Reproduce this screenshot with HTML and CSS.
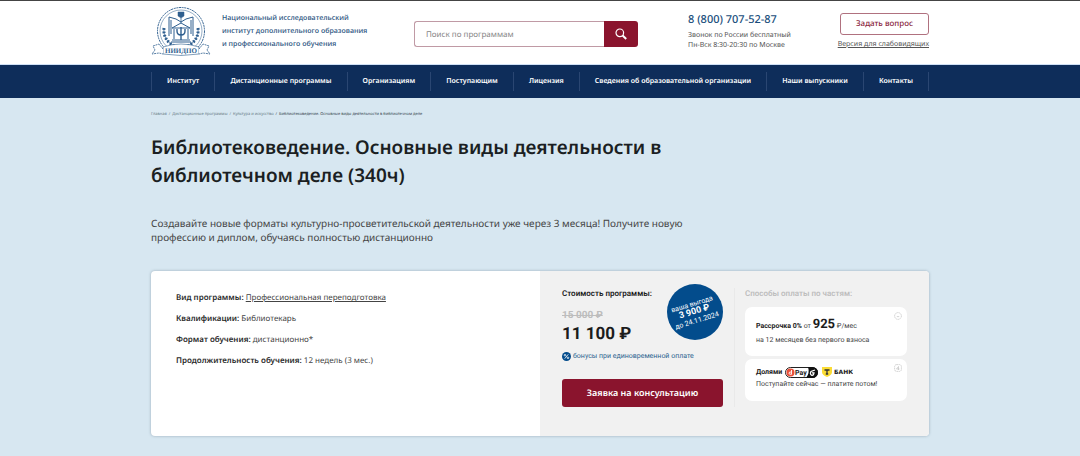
FILE: index.html
```
<!DOCTYPE html>
<html lang="ru">
<head>
  <meta charset="UTF-8">
  <meta name="viewport" content="width=device-width, initial-scale=1.0">
  <title>Библиотековедение. Основные виды деятельности в библиотечном деле</title>
  <link rel="stylesheet" href="styles.css">
</head>
<body>

  <header class="header">
    <div class="container header-row">
      <a class="logo" href="#">
        <svg class="logo-mark" viewBox="0 0 60 50" fill="none" stroke="#2f5f8f" aria-hidden="true">
          <circle cx="30" cy="25" r="23.5" stroke-width="1" stroke-dasharray="2 .7"/>
          <circle cx="30" cy="25" r="21" stroke-width=".5"/>
          <!-- book -->
          <path d="M18 30V11l7 2 5 3 5-3 7-2v19M20 28V14m20 14V14" stroke-width="1"/>
          <path d="M27 6h6v4l-3 2-3-2z" fill="#2f5f8f" stroke-width=".5"/>
          <path d="M30 12v5" stroke-width=".8"/>
          <!-- temple and psi -->
          <path d="M21 22l9-5 9 5zM23 23v10m14-10v10M21 34h18M20 36h20" stroke-width="1"/>
          <path d="M26 23v2q0 4 4 4t4-4v-2M30 21v13" stroke-width="1.4"/>
          <!-- wreath -->
          <path d="M13 22c-1 9 4 16 13 19M47 22c1 9-4 16-13 19" stroke-width="3" stroke-dasharray="1.8 1.6"/>
          <path d="M13 22c-1 9 4 16 13 19h8c9-3 14-10 13-19" stroke-width=".7"/>
          <!-- ribbon -->
          <path d="M12 41q18-6 36 0v7q-18 3-36 0z" fill="#fff" stroke-width=".6"/>
          <path d="M12 43l-4-5-6 2 2 4-3 4 7-1 4 1M48 43l4-5 6 2-2 4 3 4-7-1-4 1" fill="#fff" stroke-width=".8" stroke-dasharray="2 .7"/>
          <text x="30" y="47" class="logo-abbr">НИИДПО</text>
        </svg>
        <span class="logo-text">Национальный исследовательский<br>институт дополнительного образования<br>и профессионального обучения</span>
      </a>

      <form class="search" role="search">
        <input class="search-input" type="search" placeholder="Поиск по программам" aria-label="Поиск по программам">
        <button class="search-btn" type="submit" aria-label="Найти">
          <svg width="12" height="12" viewBox="0 0 12 12" fill="none" stroke="#fff">
            <circle cx="4.8" cy="4.8" r="3.8" stroke-width="1.2"/>
            <path d="M7.6 7.6l3.6 3.4" stroke-width="2"/>
          </svg>
        </button>
      </form>

      <div class="phone">
        <a class="phone-number" href="tel:88007075287">8 (800) 707-52-87</a>
        <p>Звонок по России бесплатный</p>
        <p>Пн-Вск 8:30-20:30 по Москве</p>
      </div>

      <div class="header-actions">
        <button class="btn-outline" type="button">Задать вопрос</button>
        <a class="vision-link" href="#">Версия для слабовидящих</a>
      </div>
    </div>
  </header>

  <nav class="nav">
    <ul class="container nav-list">
      <li><a href="#">Институт</a></li>
      <li><a href="#">Дистанционные программы</a></li>
      <li><a href="#">Организациям</a></li>
      <li><a href="#">Поступающим</a></li>
      <li><a href="#">Лицензия</a></li>
      <li><a href="#">Сведения об образовательной организации</a></li>
      <li><a href="#">Наши выпускники</a></li>
      <li><a href="#">Контакты</a></li>
    </ul>
  </nav>

  <main class="container main">
    <ol class="breadcrumbs">
      <li><a href="#">Главная</a></li>
      <li><a href="#">Дистанционные программы</a></li>
      <li><a href="#">Культура и искусство</a></li>
      <li class="current">Библиотековедение. Основные виды деятельности в библиотечном деле</li>
    </ol>

    <h1>Библиотековедение. Основные виды деятельности в библиотечном деле (340ч)</h1>
    <p class="lead">Создавайте новые форматы культурно-просветительской деятельности уже через 3 месяца! Получите новую профессию и диплом, обучаясь полностью дистанционно</p>

    <section class="card">
      <div class="info">
        <p><b>Вид программы:</b> <a href="#">Профессиональная переподготовка</a></p>
        <p><b>Квалификации:</b> Библиотекарь</p>
        <p><b>Формат обучения:</b> дистанционно*</p>
        <p><b>Продолжительность обучения:</b> 12 недель (3 мес.)</p>
      </div>

      <div class="offer">
        <div class="price">
          <h2 class="price-title">Стоимость программы:</h2>
          <s class="price-old">15 000 ₽</s>
          <p class="price-new">11 100 ₽</p>
          <p class="bonus">
            <svg width="9" height="9" viewBox="0 0 9 9" fill="none" stroke="#fff" stroke-width=".8" aria-hidden="true">
              <circle cx="4.5" cy="4.5" r="4.5" fill="#034c8c" stroke="none"/>
              <circle cx="3" cy="3.2" r=".8"/>
              <circle cx="6" cy="5.8" r=".8"/>
              <path d="M6.3 2.3L2.7 6.7"/>
            </svg>
            бонусы при единовременной оплате
          </p>
          <button class="btn-primary" type="button">Заявка на консультацию</button>
          <div class="badge">
            <div class="badge-text">ваша выгода<strong>3 900 ₽</strong>до 24.11.2024</div>
          </div>
        </div>

        <div class="parts">
          <h2 class="parts-title">Способы оплаты по частям:</h2>
          <div class="part part-plan">
            <p><b>Рассрочка 0%</b> от <strong>925</strong> ₽/мес</p>
            <p>на 12 месяцев без первого взноса</p>
            <svg class="part-icon" viewBox="0 0 8 8" fill="none" stroke="#b8b8b8" stroke-width=".6" aria-hidden="true">
              <circle cx="4" cy="4" r="3.4" stroke-dasharray="1.6 .5"/>
              <path d="M2.8 4.6h2.4"/>
            </svg>
          </div>
          <div class="part part-dolyami">
            <p class="brands">
              <b>Долями</b>
              <svg width="33" height="11" viewBox="0 0 33 11" role="img" aria-label="Долями Pay">
                <rect x=".5" y=".5" width="32" height="10" rx="5" fill="#fff" stroke="#222"/>
                <path d="M23 0h4.5a5.5 5.5 0 0 1 0 11H21q4-5 2-11z" fill="#111"/>
                <circle cx="5.5" cy="5.5" r="4" fill="#e8503a"/>
                <path d="M6.5 3v4.5M6.3 5q-2.300-.3-2.300 1.200t2.300 1" fill="none" stroke="#fff" stroke-width=".9"/>
                <text x="10" y="8" class="pay-text">Pay</text>
                <path d="M30 3l-4 1.500q-1.500 3 .8 3.800 2 .2 2.200-2.500h-2" fill="none" stroke="#fff" stroke-width="1.300"/>
              </svg>
              <svg class="bank" width="31" height="10" viewBox="0 0 31 10" role="img" aria-label="Т-Банк">
                <path d="M0 0h10v5q0 3-5 5-5-2-5-5z" fill="#fbdc34"/>
                <path d="M2.5 3h5M5 3v4M3.8 7h2.4" stroke="#333" stroke-width="1.3"/>
                <text x="12" y="7" class="bank-text">БАНК</text>
              </svg>
            </p>
            <p>Поступайте сейчас — платите потом!</p>
            <svg class="part-icon" viewBox="0 0 8 8" fill="none" stroke="#b8b8b8" stroke-width=".6" aria-hidden="true">
              <rect x=".6" y=".6" width="6.8" height="6.8" rx="2" stroke-dasharray="1.6 .5"/>
              <path d="M2.5 5h3M4.5 2.5V6M4.5 2.5L2.5 5"/>
            </svg>
          </div>
        </div>
      </div>
    </section>
  </main>

</body>
</html>
```
FILE: styles.css
```
:root{
  --navy:#0e2d5a;
  --wine:#8a142d;
  --blue:#034c8c;
  --sky:#d7e7f1;
}

*{box-sizing:border-box;}
body{
  margin:0;background:var(--sky);color:#444;
  font-family:"Noto Sans","Open Sans",sans-serif;font-size:7px;
  text-rendering:geometricPrecision;
}
h1,h2,p,ul,ol{margin:0;padding:0;}
ul,ol{list-style:none;}
a{color:inherit;text-decoration:none;}
button,input{font-family:inherit;text-rendering:inherit;}
button{cursor:pointer;}
.container{max-width:778px;margin:0 auto;}

/* ===== header ===== */
.header{background:#fff;border-top:1px solid #444;border-bottom:1px solid #cfe0f5;}
.header-row{display:flex;align-items:flex-start;height:63px;}
.logo{display:flex;gap:11px;width:263px;padding-top:5px;color:#2f5783;}
.logo-mark{width:60px;height:50px;}
.logo-abbr{
  font-family:"Liberation Serif",serif;font-size:7px;font-weight:bold;
  text-anchor:middle;fill:#2f5f8f;stroke:none;
}
.logo-text{
  padding-top:6px;white-space:nowrap;
  font-family:"Open Sans",sans-serif;font-size:7px;line-height:13px;font-weight:600;
}

.search{display:flex;width:224px;height:26px;margin-top:20px;}
.search-input{
  flex:1;min-width:0;padding:0 11px;border:1px solid #c09aa5;border-right:0;
  border-radius:3px 0 0 3px;background:#fff;font-size:8px;outline:none;
}
.search-input::placeholder{color:#858585;}
.search-btn{
  display:flex;align-items:center;justify-content:center;width:34px;padding:0;
  border:0;border-radius:0 3px 3px 0;background:var(--wine);
}

.phone{margin-left:50px;padding-top:11px;line-height:10px;color:#555;}
.phone-number{display:block;margin-bottom:3px;font-size:11px;line-height:16px;font-weight:500;color:#1a4e7c;}

.header-actions{
  display:flex;flex-direction:column;align-items:flex-end;
  margin-left:auto;padding-top:12px;
}
.btn-outline{
  width:89px;height:22px;padding:0 0 2px;border:1px solid #b0717f;border-radius:3px;
  background:#fff;color:#8a2640;font-size:8px;font-weight:500;
}
.vision-link{margin-top:5px;line-height:10px;color:#555;text-decoration:underline;}

/* ===== navigation ===== */
.nav{background:var(--navy);}
.nav-list{display:flex;align-items:center;height:33px;}
.nav-list li{
  flex:auto;text-align:center;border-left:1px solid #2a4672;
  line-height:19px;font-weight:600;color:#fff;
}
.nav-list li:last-child{border-right:1px solid #2a4672;}

/* ===== intro ===== */
.main{padding-bottom:20px;}
.breadcrumbs{display:flex;padding-top:14px;font-size:4px;line-height:6px;color:#667a86;}
.breadcrumbs li + li::before{content:"/";margin:0 2px;}
.breadcrumbs .current{color:#34444e;}
h1{
  max-width:540px;margin-top:15px;
  font-size:19px;line-height:28px;font-weight:600;color:#1b1f23;
}
.lead{max-width:550px;margin-top:27px;font-size:10px;line-height:14px;}

/* ===== program card ===== */
.card{
  display:grid;grid-template-columns:1fr 1fr;min-height:165px;margin-top:27px;
  border-radius:4px;background:#fff;overflow:hidden;
  box-shadow:0 0 3px rgba(60,80,100,.4);
}
.info{padding:21px 25px;font-size:8px;line-height:11px;}
.info p + p{margin-top:10px;}
.info b{font-weight:600;color:#2a2a2a;}
.info a{text-decoration:underline;}

.offer{
  display:flex;gap:11px;padding:17px 22px;background:#f1f1f1;
  font-family:Roboto,sans-serif;
}
.price{position:relative;flex:1;color:#1c1c1c;}
.price-title,.parts-title{font-size:8px;line-height:11px;font-weight:600;}
.price-old{display:block;margin-top:11px;font-size:10px;line-height:12px;font-weight:700;color:#bdbdbd;}
.price-new{margin-top:2px;font-size:17px;line-height:20px;font-weight:700;}
.bonus{display:flex;align-items:center;gap:2px;margin-top:7px;line-height:10px;color:#2b638f;}
.btn-primary{
  width:100%;height:28px;margin-top:18px;padding:0 0 2px;border:0;border-radius:3px;
  background:var(--wine);color:#fff;
  font-family:"Noto Sans",sans-serif;font-size:9px;font-weight:600;
}
.badge{
  position:absolute;top:-4px;right:0;width:56px;height:56px;border-radius:50%;
  display:flex;align-items:center;justify-content:center;
  background:var(--blue);color:#fff;
}
.badge-text{transform:rotate(-17deg);text-align:center;white-space:nowrap;line-height:8px;}
.badge-text strong{display:block;font-size:9px;line-height:9px;}

/* ===== payment by parts ===== */
.parts{width:173px;padding-left:10px;margin-bottom:12px;border-left:1px solid #e9e9e9;}
.parts-title{color:#bdbdbd;}
.part{position:relative;border-radius:7px;background:#fff;padding:0 11px;line-height:12px;}
.part b{color:#222;}
.part-plan{margin-top:8px;padding-top:10px;padding-bottom:10px;}
.part-plan p:first-child{line-height:15px;}
.part-plan strong{font-size:13px;color:#1c1c1c;}
.part-dolyami{margin-top:3px;padding-top:7px;padding-bottom:11px;}
.part-icon{position:absolute;top:5px;right:5px;width:8px;height:8px;}
.brands{display:flex;align-items:center;gap:3px;}
.bank{margin-left:1px;}
.pay-text{font-family:Roboto,sans-serif;font-size:7px;font-weight:700;fill:#222;}
.bank-text{font-family:"DejaVu Sans",sans-serif;font-size:6px;font-weight:bold;fill:#222;}
```
